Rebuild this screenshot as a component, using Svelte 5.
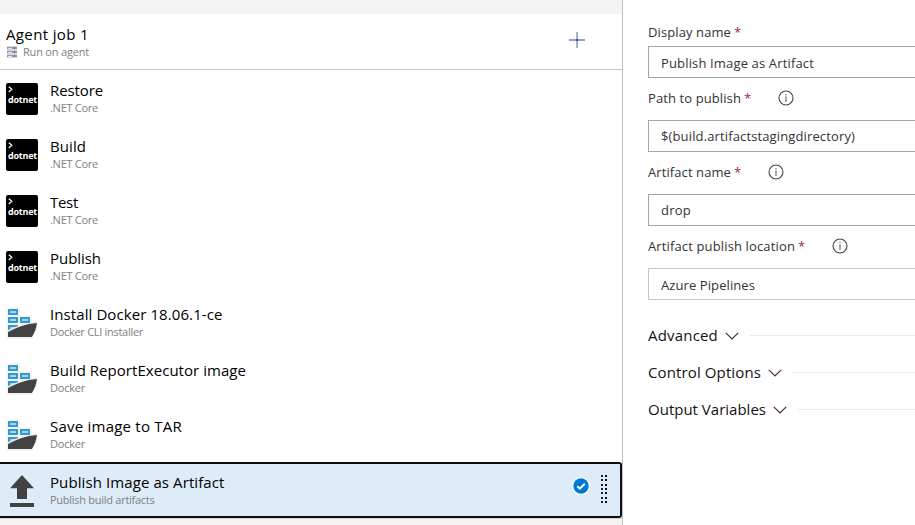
<script>
  const tasks = [
    { name: 'Restore', kind: '.NET Core', icon: 'dotnet', w: 53, kw: 48 },
    { name: 'Build', kind: '.NET Core', icon: 'dotnet', w: 36, kw: 48 },
    { name: 'Test', kind: '.NET Core', icon: 'dotnet', w: 28, kw: 48 },
    { name: 'Publish', kind: '.NET Core', icon: 'dotnet', w: 51, kw: 48 },
    { name: 'Install Docker 18.06.1-ce', kind: 'Docker CLI installer', icon: 'docker', w: 172.5, kw: 93 },
    { name: 'Build ReportExecutor image', kind: 'Docker', icon: 'docker', w: 196, kw: 35 },
    { name: 'Save image to TAR', kind: 'Docker', icon: 'docker', w: 132, kw: 35 },
    { name: 'Publish Image as Artifact', kind: 'Publish build artifacts', icon: 'upload', w: 174.5, kw: 104.5, selected: true },
  ];
  const fields = [
    { label: 'Display name', w: 83, value: 'Publish Image as Artifact', vw: 153, info: false },
    { label: 'Path to publish', w: 93, value: '$(build.artifactstagingdirectory)', vw: 194, info: true, raised: true },
    { label: 'Artifact name', w: 83, value: 'drop', vw: 30, info: true, raised: true },
    { label: 'Artifact publish location', w: 147, value: 'Azure Pipelines', vw: 94, info: true, light: true },
  ];
  const sections = [
    { name: 'Advanced', w: 70 },
    { name: 'Control Options', w: 113 },
    { name: 'Output Variables', w: 118 },
  ];

  // Spreads the letters so that the text takes up the given width.
  function fit(node, width) {
    const natural = node.getBoundingClientRect().width;
    node.style.letterSpacing = (width - natural) / node.textContent.length + 'px';
  }
</script>

<div class="app">
  <main class="jobs">
    <header class="job">
      <div class="job-text">
        <div class="title"><span use:fit={83}>Agent job 1</span></div>
        <div class="sub">
          <svg class="server" width="10" height="12" viewBox="0 0 10 12" shape-rendering="crispEdges">
            <rect width="10" height="12" fill="#d3d5dc" />
            <path d="M0 1h10v2H0zM0 5h10v2H0zM0 9h10v2H0z" fill="#9b9eaa" />
            <path d="M1 2h4v1H1zM1 6h4v1H1zM1 10h4v1H1z" fill="#dfe2ea" />
            <path d="M7 1h1v2H7zM7 5h1v2H7zM7 9h1v2H7z" fill="#656b79" />
          </svg>
          <span use:fit={66}>Run on agent</span>
        </div>
      </div>
      <svg class="plus" width="16" height="16" viewBox="0 0 16 16" shape-rendering="crispEdges">
        <path d="M0 7h16v2H0z" fill="#8b9fd3" />
        <path d="M7 0h1v16H7z" fill="#d9afc5" />
        <path d="M8 0h1v16H8z" fill="#6eace0" />
        <path d="M7 7h2v2H7z" fill="#4054a4" />
      </svg>
    </header>

    {#each tasks as task}
      <div class="task" class:selected={task.selected}>
        <div class="icon">
          {#if task.icon === 'dotnet'}
            <div class="dotnet">
              <svg width="5" height="7" viewBox="0 0 5 7"><path d="M.8.8 3.8 3.3.8 6" fill="none" stroke="#fff" stroke-width="1.2" /></svg>
              <span use:fit={29}>dotnet</span>
            </div>
          {:else if task.icon === 'docker'}
            <svg width="32" height="32" viewBox="0 0 32 32">
              <path d="M0 0h14v8h12v7l6-1-5 18H0z" fill="#f4f4f4" />
              <path d="M2 2h10v6H2zM2 10h10v6H2zM14 10h10v6H14zM2 18h10v6H2z" fill="#3999c6" />
              <path d="M4 4h6v2H4zM4 12h6v2H4zM16 12h6v2h-6zM4 20h6v2H4z" fill="#8fdcf8" />
              <path d="M1 23.800C9 19.800 19 15.700 31.500 15l-.3 2.500L27 30H1z" fill="#f4f4f4" />
              <path d="M2 25C11 20.500 20 16.700 31 16c-.7 5-2.300 10-5.200 14H2z" fill="#424242" />
            </svg>
          {:else}
            <svg width="32" height="36" viewBox="0 0 32 36">
              <path d="M16 2 28 15.200H21V26H11V15.200H4zM4 30h24v4H4z" fill="#424242" />
            </svg>
          {/if}
        </div>
        <div class="text">
          <div class="title"><span use:fit={task.w}>{task.name}</span></div>
          <div class="sub"><span use:fit={task.kw}>{task.kind}</span></div>
        </div>
        {#if task.selected}
          <svg class="check" width="18" height="18" viewBox="0 0 18 18">
            <circle cx="9" cy="9" r="9" fill="#fff" />
            <circle cx="9" cy="9" r="7.700" fill="#0078d7" />
            <path d="m5.300 9.200 2.500 2.500 5-5" fill="none" stroke="#fff" stroke-width="2" />
          </svg>
          <svg class="grip" width="8" height="29" viewBox="0 0 8 29" shape-rendering="crispEdges">
            {#each [0, 4, 9, 13, 17, 22, 26] as y}
              <rect x="1" {y} width="2" height="2" fill="#222" />
              <rect x="5" {y} width="2" height="2" fill="#050532" />
            {/each}
          </svg>
        {/if}
      </div>
    {/each}
    <div class="rest"></div>
  </main>

  <aside class="details">
    {#each fields as field}
      <div class="label" class:tall={field.info}>
        <span use:fit={field.w}>{field.label}</span>
        <span class="required">*</span>
        {#if field.info}
          <svg class="info" width="16" height="16" viewBox="0 0 16 16">
            <circle cx="8" cy="8" r="7" fill="none" stroke="#444" stroke-width="1.100" />
            <path d="M8 6.500V12M8 4v1.300" stroke="#53617a" stroke-width="1.100" />
          </svg>
        {/if}
      </div>
      <div class="input" class:light={field.light} class:raised={field.raised}><span use:fit={field.vw}>{field.value}</span></div>
    {/each}

    <div class="sections">
      {#each sections as section}
        <div class="section">
          <span class="name"><span use:fit={section.w}>{section.name}</span></span>
          <svg width="14" height="8" viewBox="0 0 14 8"><path d="m.8.8 6.200 6.200L13.200.8" fill="none" stroke="#4c2c35" stroke-width="1.200" /></svg>
          <i></i>
        </div>
      {/each}
    </div>
  </aside>
</div>

<style>
  .app {
    display: flex;
    width: 915px;
    height: 525px;
    overflow: hidden;
    background: #fff;
    color: #000;
    font-family: 'Open Sans', 'Noto Sans', sans-serif;
    font-size: 15px;
    white-space: nowrap;
  }
  .jobs {
    display: flex;
    flex-direction: column;
    box-sizing: border-box;
    width: 623px;
    flex: none;
    padding-top: 14px;
    border-right: 1px solid #c3c3c3;
    background: linear-gradient(#f3f3f3 14px, #fff 14px);
  }
  .job {
    display: flex;
    justify-content: space-between;
    box-sizing: border-box;
    height: 56px;
    padding: 10px 37px 0 6px;
    border-bottom: 1px solid #c8c8c8;
  }
  .title {
    height: 20px;
    line-height: 20px;
  }
  .sub {
    display: flex;
    height: 14px;
    margin-top: 1px;
    font-size: 11px;
    line-height: 14px;
    color: #808080;
  }
  .server {
    margin: 1px 6px 0 1px;
  }
  .plus {
    margin-top: 8px;
  }
  .task {
    display: flex;
    box-sizing: border-box;
    height: 56px;
    padding: 10px 13px 0 6px;
  }
  .icon {
    width: 32px;
    margin: 3px 12px 0 0;
  }
  .task.selected {
    padding: 8px 12px 0 6px;
    border: 2px solid #101010;
    border-left: 0;
    border-radius: 0 3px 3px 0;
    background: #deecf9;
  }
  .selected .icon {
    margin-top: 1px;
  }
  .dotnet {
    display: flex;
    flex-direction: column;
    align-items: flex-start;
    box-sizing: border-box;
    width: 32px;
    height: 32px;
    padding: 3px 0 0 2px;
    border-radius: 2px;
    background: #000;
    color: #fff;
    font-size: 9px;
    font-weight: 700;
    line-height: 14px;
  }
  .text {
    flex: 1;
  }
  .check {
    margin: 5px 10px 0 0;
  }
  .grip {
    margin-top: 3px;
  }
  .rest {
    flex: 1;
    border-top: 1px solid #d5d5d5;
    background: #f3f3f3;
  }
  .details {
    flex: 1;
    min-width: 0;
    padding: 22px 0 0 25px;
    color: #333;
    font-size: 13px;
  }
  .label {
    display: flex;
    height: 24px;
    line-height: 20px;
  }
  .label.tall {
    height: 32px;
    padding-top: 10px;
  }
  .required {
    margin-left: 3px;
    color: #a4262c;
  }
  .info {
    margin: 2px 0 0 27px;
  }
  .input {
    box-sizing: border-box;
    height: 32px;
    padding-left: 12px;
    border: 1px solid #a6a6a6;
    border-right: 0;
    line-height: 32px;
  }
  .input.raised {
    line-height: 30px;
  }
  .input.light {
    border-color: #c8c8c8;
  }
  .sections {
    padding-top: 17px;
    color: #111;
    font-size: 15px;
  }
  .section {
    display: flex;
    align-items: center;
    height: 37px;
    line-height: 20px;
  }
  .section .name {
    padding-bottom: 2px;
  }
  .section svg {
    margin: 1px 11px 0 7px;
  }
  .section i {
    flex: 1;
    height: 1px;
    background: #eaeaea;
  }
</style>
